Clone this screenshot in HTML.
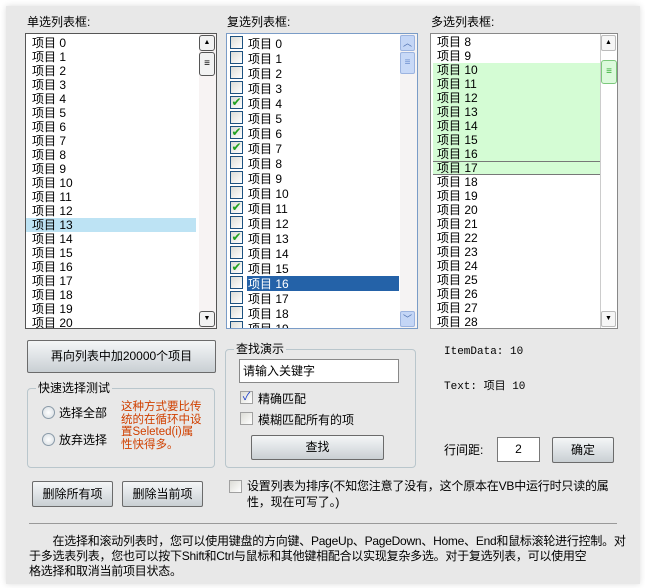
<!DOCTYPE html>
<html><head><meta charset="utf-8"><style>
*{margin:0;padding:0;box-sizing:border-box}
body{width:645px;height:588px;background:#fff;font:12px "Liberation Sans","WenQuanYi Zen Hei","Noto Sans CJK SC",sans-serif;color:#000;position:relative;overflow:hidden}
#bg{position:absolute;left:6px;top:6px;width:634px;height:578px;background:#e8e8e8;box-shadow:0 0 6px #ddd}
.a{position:absolute;white-space:nowrap}
.lb{position:absolute;background:#fff;overflow:hidden}
.r{position:absolute;left:0;height:14px;line-height:14px;padding-left:6px}
.sb{position:absolute;top:0;bottom:0;width:17px;background:#f7f3f3}
.btn{position:absolute;border:1px solid #6b6b6b;border-radius:2px;background:linear-gradient(#f4f6f7,#dfe3e6 50%,#c9cfd3);text-align:center}
.grp{position:absolute;border:1px solid #b9c6cc;border-radius:4px}
.glab{position:absolute;background:#e8e8e8;padding:0 2px;top:-8px;left:8px;line-height:14px}
.cb{position:absolute;width:13px;height:13px;border:1px solid #1c5180;background:linear-gradient(135deg,#dcdcd6,#fff)}
.cb2{position:absolute;width:13px;height:13px;border:1px solid #a0a0a0;background:linear-gradient(135deg,#dcdcd6,#fff)}
.rad{position:absolute;width:13px;height:13px;border-radius:50%;border:1px solid #8a9aa8;background:radial-gradient(#fff,#d4dbe0)}
.ck{color:#21a121;font-size:12px;line-height:11px;text-align:center}
</style></head><body>
<div id="bg"></div>

<div class="a" style="left:27px;top:13px">单选列表框:</div>
<div class="a" style="left:227px;top:13px">复选列表框:</div>
<div class="a" style="left:431px;top:13px">多选列表框:</div>

<div class="lb" style="left:25px;top:33px;width:192px;height:296px;border:1px solid #555">
<div style="position:absolute;left:0;top:184px;width:170px;height:14px;background:#bde3f4"></div>
<div class="r" style="top:2px">项目 0</div><div class="r" style="top:16px">项目 1</div><div class="r" style="top:30px">项目 2</div><div class="r" style="top:44px">项目 3</div><div class="r" style="top:58px">项目 4</div><div class="r" style="top:72px">项目 5</div><div class="r" style="top:86px">项目 6</div><div class="r" style="top:100px">项目 7</div><div class="r" style="top:114px">项目 8</div><div class="r" style="top:128px">项目 9</div><div class="r" style="top:142px">项目 10</div><div class="r" style="top:156px">项目 11</div><div class="r" style="top:170px">项目 12</div><div class="r" style="top:184px">项目 13</div><div class="r" style="top:198px">项目 14</div><div class="r" style="top:212px">项目 15</div><div class="r" style="top:226px">项目 16</div><div class="r" style="top:240px">项目 17</div><div class="r" style="top:254px">项目 18</div><div class="r" style="top:268px">项目 19</div><div class="r" style="top:282px">项目 20</div>
<div class="sb" style="right:0">
<div style="position:absolute;left:0;top:1px;width:16px;height:16px;border:1px solid #555;border-radius:3px;background:#f2f2f2;text-align:center;font-size:7px;line-height:14px">▲</div>
<div style="position:absolute;left:0;top:18px;width:16px;height:24px;border:1px solid #555;border-radius:3px;background:#f2f2f2;text-align:center;line-height:22px;font-size:10px">≡</div>
<div style="position:absolute;left:0;bottom:1px;width:16px;height:16px;border:1px solid #555;border-radius:3px;background:#f2f2f2;text-align:center;font-size:7px;line-height:14px">▼</div>
</div></div>

<div class="lb" style="left:226px;top:33px;width:192px;height:296px;border:1px solid #7a9cc7">
<div style="position:absolute;left:20px;top:242px;width:152px;height:15px;background:#2462a8"></div>
<div class="sb" style="right:0;background:#f5f3f3">
<div style="position:absolute;left:0;top:1px;width:15px;height:16px;border:1px solid #9cb4e0;border-radius:2px;background:#c4d6f6;color:#4d6fae;text-align:center;font-size:9px;line-height:14px">︿</div>
<div style="position:absolute;left:0;top:18px;width:15px;height:22px;border:1px solid #9cb4e0;border-radius:2px;background:#c8d9f7;color:#6d8fcf;text-align:center;line-height:20px;font-size:10px">≡</div>
<div style="position:absolute;left:0;bottom:1px;width:15px;height:16px;border:1px solid #9cb4e0;border-radius:2px;background:#c4d6f6;color:#4d6fae;text-align:center;font-size:9px;line-height:14px">﹀</div>
</div></div>

<div class="lb" style="left:430px;top:33px;width:188px;height:296px;border:1px solid #888">
<div style="position:absolute;left:2px;top:29px;width:167px;height:112px;background:#d4fcd4"></div>
<div style="position:absolute;left:2px;top:127px;width:167px;height:14px;border-top:1px solid #777;border-bottom:1px solid #777"></div>
<div class="r" style="top:1px">项目 8</div><div class="r" style="top:15px">项目 9</div><div class="r" style="top:29px">项目 10</div><div class="r" style="top:43px">项目 11</div><div class="r" style="top:57px">项目 12</div><div class="r" style="top:71px">项目 13</div><div class="r" style="top:85px">项目 14</div><div class="r" style="top:99px">项目 15</div><div class="r" style="top:113px">项目 16</div><div class="r" style="top:127px">项目 17</div><div class="r" style="top:141px">项目 18</div><div class="r" style="top:155px">项目 19</div><div class="r" style="top:169px">项目 20</div><div class="r" style="top:183px">项目 21</div><div class="r" style="top:197px">项目 22</div><div class="r" style="top:211px">项目 23</div><div class="r" style="top:225px">项目 24</div><div class="r" style="top:239px">项目 25</div><div class="r" style="top:253px">项目 26</div><div class="r" style="top:267px">项目 27</div><div class="r" style="top:281px">项目 28</div>
<div class="sb" style="right:0;background:#fff;border-left:1px solid #ccc">
<div style="position:absolute;left:0;top:1px;width:15px;height:16px;border:1px solid #bbb;border-radius:2px;background:#f6f6f6;text-align:center;font-size:7px;line-height:14px">▲</div>
<div style="position:absolute;left:0;top:26px;width:16px;height:24px;border:1px solid #7cc87c;border-radius:3px;background:#dcfadc;color:#3a3;text-align:center;line-height:22px;font-size:10px">≡</div>
<div style="position:absolute;left:0;bottom:1px;width:15px;height:16px;border:1px solid #bbb;border-radius:2px;background:#f6f6f6;text-align:center;font-size:7px;line-height:14px">▼</div>
</div></div>

<div class="btn" style="left:27px;top:340px;width:189px;height:33px;line-height:31px">再向列表中加20000个项目</div>

<div class="grp" style="left:27px;top:388px;width:188px;height:80px"><div class="glab">快速选择测试</div></div>
<div class="rad" style="left:42px;top:406px"></div><div class="a" style="left:59px;top:404px">选择全部</div>
<div class="rad" style="left:42px;top:433px"></div><div class="a" style="left:59px;top:431px">放弃选择</div>
<div class="a" style="left:121px;top:401px;color:#d04000;line-height:12.5px;font-size:11.5px">这种方式要比传<br>统的在循环中设<br>置Seleted(i)属<br>性快得多。</div>

<div class="grp" style="left:225px;top:349px;width:191px;height:119px"><div class="glab">查找演示</div></div>
<div style="position:absolute;left:239px;top:359px;width:160px;height:24px;background:#fff;border:1px solid #888;line-height:22px;padding-left:3px">请输入关键字</div>
<div class="cb2" style="left:240px;top:391px;color:#1a3cc8;font-size:11px;line-height:11px;text-align:center">✓</div><div class="a" style="left:258px;top:390px">精确匹配</div>
<div class="cb2" style="left:240px;top:412px"></div><div class="a" style="left:258px;top:411px">模糊匹配所有的项</div>
<div class="btn" style="left:251px;top:435px;width:133px;height:25px;line-height:23px">查找</div>

<div class="a" style="left:444px;top:346px;font-family:'Liberation Mono','WenQuanYi Zen Hei',monospace;font-size:11px">ItemData: 10</div>
<div class="a" style="left:444px;top:377px;font-family:'Liberation Mono','WenQuanYi Zen Hei',monospace;font-size:11px">Text: 项目 10</div>
<div class="a" style="left:444px;top:441px">行间距:</div>
<div style="position:absolute;left:497px;top:437px;width:43px;height:25px;background:#fff;border:1px solid #777;text-align:center;line-height:23px">2</div>
<div class="btn" style="left:552px;top:437px;width:62px;height:26px;line-height:24px">确定</div>

<div class="btn" style="left:32px;top:481px;width:81px;height:26px;line-height:24px">删除所有项</div>
<div class="btn" style="left:122px;top:481px;width:81px;height:26px;line-height:24px">删除当前项</div>
<div class="cb2" style="left:229px;top:480px"></div>
<div class="a" style="left:247px;top:478px;line-height:16px;letter-spacing:-0.2px">设置列表为排序(不知您注意了没有，这个原本在VB中运行时只读的属<br>性，现在可写了。)</div>

<div style="position:absolute;left:29px;top:523px;width:588px;height:1px;background:#999"></div>
<div class="a" style="left:29px;top:534px;line-height:15px;letter-spacing:-0.25px">　　在选择和滚动列表时，您可以使用键盘的方向键、PageUp、PageDown、Home、End和鼠标滚轮进行控制。对<br>于多选表列表，您也可以按下Shift和Ctrl与鼠标和其他键相配合以实现复杂多选。对于复选列表，可以使用空<br>格选择和取消当前项目状态。</div>

<div style="position:absolute;left:227px;top:34px;width:172px;height:294px;overflow:hidden">
<div class="cb" style="left:3px;top:2px"></div><div class="a" style="left:21px;top:1px">项目 0</div>
<div class="cb" style="left:3px;top:17px"></div><div class="a" style="left:21px;top:16px">项目 1</div>
<div class="cb" style="left:3px;top:32px"></div><div class="a" style="left:21px;top:31px">项目 2</div>
<div class="cb" style="left:3px;top:47px"></div><div class="a" style="left:21px;top:46px">项目 3</div>
<div class="cb ck" style="left:3px;top:62px">✔</div><div class="a" style="left:21px;top:61px">项目 4</div>
<div class="cb" style="left:3px;top:77px"></div><div class="a" style="left:21px;top:76px">项目 5</div>
<div class="cb ck" style="left:3px;top:92px">✔</div><div class="a" style="left:21px;top:91px">项目 6</div>
<div class="cb ck" style="left:3px;top:107px">✔</div><div class="a" style="left:21px;top:106px">项目 7</div>
<div class="cb" style="left:3px;top:122px"></div><div class="a" style="left:21px;top:121px">项目 8</div>
<div class="cb" style="left:3px;top:137px"></div><div class="a" style="left:21px;top:136px">项目 9</div>
<div class="cb" style="left:3px;top:152px"></div><div class="a" style="left:21px;top:151px">项目 10</div>
<div class="cb ck" style="left:3px;top:167px">✔</div><div class="a" style="left:21px;top:166px">项目 11</div>
<div class="cb" style="left:3px;top:182px"></div><div class="a" style="left:21px;top:181px">项目 12</div>
<div class="cb ck" style="left:3px;top:197px">✔</div><div class="a" style="left:21px;top:196px">项目 13</div>
<div class="cb" style="left:3px;top:212px"></div><div class="a" style="left:21px;top:211px">项目 14</div>
<div class="cb ck" style="left:3px;top:227px">✔</div><div class="a" style="left:21px;top:226px">项目 15</div>
<div class="cb" style="left:3px;top:242px"></div><div class="a" style="left:21px;top:241px;color:#fff">项目 16</div>
<div class="cb" style="left:3px;top:257px"></div><div class="a" style="left:21px;top:256px">项目 17</div>
<div class="cb" style="left:3px;top:272px"></div><div class="a" style="left:21px;top:271px">项目 18</div>
<div class="cb" style="left:3px;top:287px"></div><div class="a" style="left:21px;top:286px">项目 19</div>
</div>
</body></html>
